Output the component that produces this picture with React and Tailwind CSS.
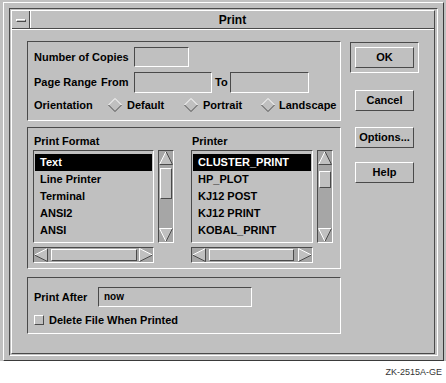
const sunken = "border border-t-[#4a4a4a] border-l-[#4a4a4a] border-r-white border-b-white";
const raised = "border border-t-white border-l-white border-r-[#4a4a4a] border-b-[#4a4a4a]";

// little scroll arrows, 14x14, light edge up/left, dark edge down/right
function Arrow({ dir }) {
  const light = "#ffffff";
  const dark = "#4a4a4a";
  return (
    <svg width="14" height="14" viewBox="0 0 14 14" className="block">
      {dir === "up" && (
        <>
          <polygon points="7,0.5 13.5,13.5 0.5,13.5" fill="#c0c0c0" />
          <line x1="0.5" y1="13.5" x2="7" y2="0.5" stroke={light} />
          <line x1="7" y1="0.5" x2="13.5" y2="13.5" stroke={dark} />
          <line x1="0.5" y1="13.5" x2="13.5" y2="13.5" stroke={dark} />
        </>
      )}
      {dir === "down" && (
        <>
          <polygon points="0.5,0.5 13.5,0.5 7,13.5" fill="#c0c0c0" />
          <line x1="0.5" y1="0.5" x2="13.5" y2="0.5" stroke={light} />
          <line x1="0.5" y1="0.5" x2="7" y2="13.5" stroke={light} />
          <line x1="7" y1="13.5" x2="13.5" y2="0.5" stroke={dark} />
        </>
      )}
      {dir === "left" && (
        <>
          <polygon points="0.5,7 13.5,0.5 13.5,13.5" fill="#c0c0c0" />
          <line x1="0.5" y1="7" x2="13.5" y2="0.5" stroke={light} />
          <line x1="0.5" y1="7" x2="13.5" y2="13.5" stroke={dark} />
          <line x1="13.5" y1="0.5" x2="13.5" y2="13.5" stroke={dark} />
        </>
      )}
      {dir === "right" && (
        <>
          <polygon points="0.5,0.5 13.5,7 0.5,13.5" fill="#c0c0c0" />
          <line x1="0.5" y1="0.5" x2="0.5" y2="13.5" stroke={light} />
          <line x1="0.5" y1="0.5" x2="13.5" y2="7" stroke={light} />
          <line x1="13.5" y1="7" x2="0.5" y2="13.5" stroke={dark} />
        </>
      )}
    </svg>
  );
}

function Diamond() {
  return (
    <svg width="14" height="14" viewBox="0 0 14 14" className="block shrink-0">
      <line x1="0.5" y1="7" x2="7" y2="0.5" stroke="#ffffff" />
      <line x1="7" y1="0.5" x2="13.5" y2="7" stroke="#ffffff" />
      <line x1="13.5" y1="7" x2="7" y2="13.5" stroke="#4a4a4a" />
      <line x1="7" y1="13.5" x2="0.5" y2="7" stroke="#4a4a4a" />
    </svg>
  );
}

function ListPane({ label, items, listW, thumbTop, thumbH, hThumbL, hThumbW }) {
  return (
    <div className="flex flex-col">
      <div className="h-[14px] flex items-center pl-[1px]">{label}</div>
      <div className="mt-[2px] flex">
        <div className={`${sunken} h-[93px] pt-[3px] px-[1px]`} style={{ width: listW }}>
          {items.map((it, i) => (
            <div
              key={it}
              className={`h-[17px] flex items-center pl-[5px] whitespace-nowrap ${i === 0 ? "bg-black text-white" : ""}`}
            >
              {it}
            </div>
          ))}
        </div>
        {/* vertical scroll bar */}
        <div className={`${sunken} ml-[4px] w-[16px] h-[93px] bg-[#a6a6a6] flex flex-col`}>
          <Arrow dir="up" />
          <div className="flex-1 relative">
            <div className={`${raised} absolute left-[1px] w-[12px] bg-[#c0c0c0]`} style={{ top: thumbTop, height: thumbH }} />
          </div>
          <Arrow dir="down" />
        </div>
      </div>
      {/* horizontal scroll bar */}
      <div className={`${sunken} mt-[4px] h-[16px] bg-[#a6a6a6] flex`} style={{ width: listW }}>
        <Arrow dir="left" />
        <div className="flex-1 relative">
          <div className={`${raised} absolute top-[1px] h-[12px] bg-[#c0c0c0]`} style={{ left: hThumbL, width: hThumbW }} />
        </div>
        <Arrow dir="right" />
      </div>
    </div>
  );
}

function Btn({ children }) {
  return (
    <div className={`${raised} w-[59px] h-[21px] flex items-center justify-center bg-[#c0c0c0]`}>{children}</div>
  );
}

export default function App() {
  return (
    <div className="w-[446px] h-[383px] bg-white font-['Liberation_Sans',Arial,sans-serif] text-black text-[11px] font-bold leading-none">
      <div className="w-[446px] h-[361px] bg-[#c0c0c0] pt-[2px] pl-[3px]">
        <div className="w-[441px] h-[359px] border border-t-white border-l-white border-r-[#3a3a3a] border-b-[#3a3a3a] pt-[5px] pl-[5px]">
          {/* window frame */}
          <div className={`${sunken} w-[429px] h-[348px] pt-[1px] pl-[1px] pr-[2px] pb-[1px]`}>
            <div className={`${raised} h-full flex flex-col`}>
              {/* title bar */}
              <div className="h-[18px] flex border-b border-b-[#4a4a4a]">
                <div className="w-[18px] h-full border-r border-r-[#4a4a4a] flex items-center justify-center">
                  <div className="w-[10px] h-[3px] border border-t-white border-l-white border-r-[#4a4a4a] border-b-[#4a4a4a] mt-[2px]" />
                </div>
                <div className="flex-1 h-full border-l border-l-white flex items-center justify-center text-[12px]">Print</div>
              </div>

              {/* body */}
              <div className="flex-1 border-t border-t-white pl-[15px] pt-[11px] flex">
                <div className="w-[314px] flex flex-col">
                  {/* copies / range / orientation */}
                  <div className={`${sunken} h-[80px] pl-[6px]`}>
                    <div className="mt-[5px] h-[20px] flex items-center">
                      <span className="w-[100px]">Number of Copies</span>
                      <div className={`${sunken} w-[55px] h-[20px]`} />
                    </div>
                    <div className="mt-[5px] h-[20px] flex items-center">
                      <span className="w-[67px]">Page Range</span>
                      <span className="w-[33px]">From</span>
                      <div className={`${sunken} w-[78px] h-[21px]`} />
                      <span className="w-[18px] pl-[3px]">To</span>
                      <div className={`${sunken} w-[79px] h-[21px]`} />
                    </div>
                    <div className="mt-[4px] h-[18px] flex items-center">
                      <span className="w-[74px]">Orientation</span>
                      <div className="w-[76px] flex items-center gap-[5px]">
                        <Diamond />
                        <span>Default</span>
                      </div>
                      <div className="w-[77px] flex items-center gap-[5px]">
                        <Diamond />
                        <span>Portrait</span>
                      </div>
                      <div className="flex items-center gap-[4px]">
                        <Diamond />
                        <span>Landscape</span>
                      </div>
                    </div>
                  </div>

                  {/* format / printer lists */}
                  <div className={`${sunken} mt-[6px] h-[142px] pl-[5px] pt-[6px] flex`}>
                    <ListPane
                      label="Print Format"
                      items={["Text", "Line Printer", "Terminal", "ANSI2", "ANSI"]}
                      listW={121}
                      thumbTop={3}
                      thumbH={31}
                      hThumbL={3}
                      hThumbW={86}
                    />
                    <div className="ml-[17px]">
                      <ListPane
                        label="Printer"
                        items={["CLUSTER_PRINT", "HP_PLOT", "KJ12 POST", "KJ12 PRINT", "KOBAL_PRINT"]}
                        listW={122}
                        thumbTop={6}
                        thumbH={17}
                        hThumbL={3}
                        hThumbW={85}
                      />
                    </div>
                  </div>

                  {/* print after */}
                  <div className={`${sunken} mt-[8px] h-[57px] pl-[6px]`}>
                    <div className="mt-[9px] h-[20px] flex items-center">
                      <span className="w-[64px]">Print After</span>
                      <div className={`${sunken} w-[154px] h-[20px] flex items-center pl-[5px] text-[10px]`}>now</div>
                    </div>
                    <div className="mt-[8px] h-[10px] flex items-center">
                      <div className={`${raised} w-[10px] h-[10px]`} />
                      <span className="ml-[5px]">Delete File When Printed</span>
                    </div>
                  </div>
                </div>

                {/* buttons */}
                <div className="ml-[9px] flex flex-col items-start">
                  <div className={`${sunken} mt-[1px] w-[69px] h-[31px] p-[4px]`}>
                    <Btn>OK</Btn>
                  </div>
                  <div className="ml-[5px] mt-[17px]"><Btn>Cancel</Btn></div>
                  <div className="ml-[5px] mt-[16px]"><Btn>Options...</Btn></div>
                  <div className="ml-[5px] mt-[14px]"><Btn>Help</Btn></div>
                </div>
              </div>
            </div>
          </div>
        </div>
      </div>
      <div className="h-[22px] flex items-center justify-end pr-[4px] text-[9px] font-normal text-[#333]">ZK-2515A-GE</div>
    </div>
  );
}
